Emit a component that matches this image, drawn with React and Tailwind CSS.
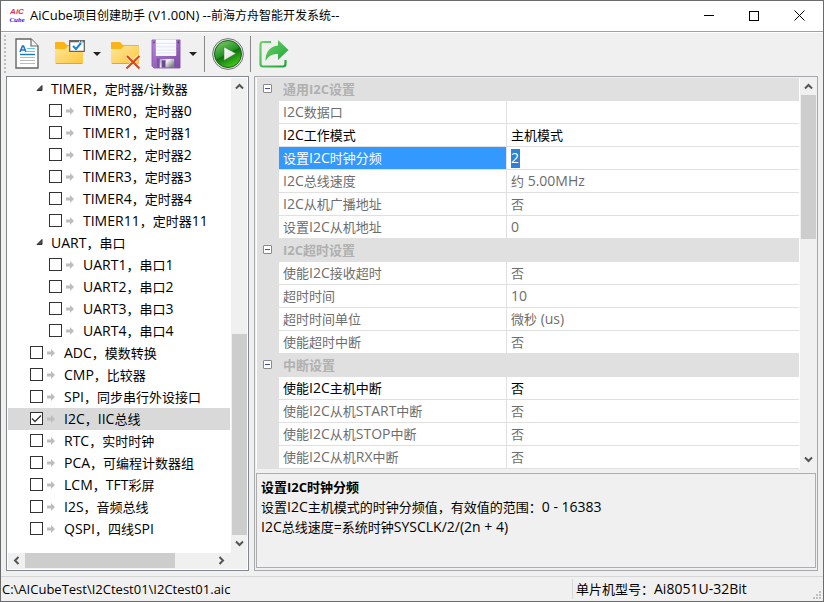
import { useState } from "react";

const TREE = [
  { id: "timer", label: "TIMER，定时器/计数器", type: "group" },
  { id: "timer0", label: "TIMER0，定时器0", type: "child" },
  { id: "timer1", label: "TIMER1，定时器1", type: "child" },
  { id: "timer2", label: "TIMER2，定时器2", type: "child" },
  { id: "timer3", label: "TIMER3，定时器3", type: "child" },
  { id: "timer4", label: "TIMER4，定时器4", type: "child" },
  { id: "timer11", label: "TIMER11，定时器11", type: "child" },
  { id: "uart", label: "UART，串口", type: "group" },
  { id: "uart1", label: "UART1，串口1", type: "child" },
  { id: "uart2", label: "UART2，串口2", type: "child" },
  { id: "uart3", label: "UART3，串口3", type: "child" },
  { id: "uart4", label: "UART4，串口4", type: "child" },
  { id: "adc", label: "ADC，模数转换", type: "item" },
  { id: "cmp", label: "CMP，比较器", type: "item" },
  { id: "spi", label: "SPI，同步串行外设接口", type: "item" },
  { id: "i2c", label: "I2C，IIC总线", type: "item" },
  { id: "rtc", label: "RTC，实时时钟", type: "item" },
  { id: "pca", label: "PCA，可编程计数器组", type: "item" },
  { id: "lcm", label: "LCM，TFT彩屏", type: "item" },
  { id: "i2s", label: "I2S，音频总线", type: "item" },
  { id: "qspi", label: "QSPI，四线SPI", type: "item" },
];

const SECTIONS = [
  {
    title: "通用I2C设置",
    rows: [
      { name: "I2C数据口", value: "" },
      { name: "I2C工作模式", value: "主机模式", enabled: true },
      { name: "设置I2C时钟分频", value: "2", editing: true },
      { name: "I2C总线速度", value: "约 5.00MHz" },
      { name: "I2C从机广播地址", value: "否" },
      { name: "设置I2C从机地址", value: "0" },
    ],
  },
  {
    title: "I2C超时设置",
    rows: [
      { name: "使能I2C接收超时", value: "否" },
      { name: "超时时间", value: "10" },
      { name: "超时时间单位", value: "微秒 (us)" },
      { name: "使能超时中断", value: "否" },
    ],
  },
  {
    title: "中断设置",
    rows: [
      { name: "使能I2C主机中断", value: "否", enabled: true },
      { name: "使能I2C从机START中断", value: "否" },
      { name: "使能I2C从机STOP中断", value: "否" },
      { name: "使能I2C从机RX中断", value: "否" },
    ],
  },
];

// Latin letters look small next to Chinese ones, so set them one pixel larger
function Mixed({ text, latin = "text-[14px]" }) {
  return (
    <span>
      {text.split(/([\x20-\x7e]+)/).map((part, i) =>
        i % 2 ? (
          <span key={i} className={`leading-none ${latin}`}>
            {part}
          </span>
        ) : (
          part
        )
      )}
    </span>
  );
}

function LogoIcon() {
  return (
    <div
      aria-hidden="true"
      className="w-4 flex flex-col items-center font-bold italic leading-[9px]"
    >
      <span className="text-[8px] text-[#e0305a] font-['Liberation_Sans',sans-serif]">
        AiC
      </span>
      <span className="text-[7px] text-[#1a1af0] font-['Liberation_Serif',serif]">
        Cube
      </span>
    </div>
  );
}

function NewFileIcon() {
  return (
    <svg width="24" height="31" viewBox="0 0 24 31" fill="none">
      <path d="M1 1h15l7 7v22H1z" fill="#fff" stroke="#666" strokeWidth="1.4" />
      <path d="M16 1v7h7" fill="#f4f4f4" stroke="#666" strokeWidth="1.2" />
      <path d="M5 14l2.5-6h1L11 14M6.2 12h3.6" stroke="#1a78c8" strokeWidth="1.6" />
      <path d="M12 10.5h8M12 13.5h8" stroke="#5cc8f5" strokeWidth="1.2" />
      <path d="M5 16.5h15" stroke="#1a78c8" strokeWidth="1.4" />
      <path d="M5 19.5h15M5 22.5h15M5 25.5h15" stroke="#bbb" strokeWidth="1.1" />
    </svg>
  );
}

function FolderBase({ id }) {
  return (
    <>
      <defs>
        <linearGradient id={id} x1="0" y1="0" x2="1" y2="1">
          <stop offset="0" stopColor="#ffe69a" />
          <stop offset="1" stopColor="#fdc63c" />
        </linearGradient>
      </defs>
      <path d="M0 5q0-1 1-1h8l3 3h15q1 0 1 1v6H0z" fill="#f9b418" />
      <path
        d="M0 11h10l3-3h14q1 0 1 1v16q0 1-1 1H1q-1 0-1-1z"
        fill={`url(#${id})`}
      />
      <path d="M1 25.5h26" stroke="#e2a62e" />
    </>
  );
}

function OpenFolderIcon() {
  return (
    <svg width="30" height="32" viewBox="0 0 30 32" fill="none">
      <FolderBase id="folderOpen" />
      <path d="M14.7 2.7h14.6v10.6H14.7z" fill="#fff" stroke="#666" strokeWidth="1.3" />
      <path d="M14.5 3.5h15" stroke="#666" strokeWidth="1.6" />
      <path d="M24 3.3h1M26.5 3.3h1" stroke="#fff" strokeWidth="1" />
      <path d="M18 8l3 3 5-6" stroke="#1683d8" strokeWidth="2" />
    </svg>
  );
}

function DeleteFolderIcon() {
  return (
    <svg width="30" height="32" viewBox="0 0 30 32" fill="none">
      <FolderBase id="folderDelete" />
      <path
        d="M16 18l12 12.5M28 18L16 30.5"
        stroke="#fff"
        strokeOpacity="0.6"
        strokeWidth="4"
      />
      <path d="M16 18l12.5 12.5M28.5 18L15.5 30.5" stroke="#d9481c" strokeWidth="2.2" />
    </svg>
  );
}

function SaveIcon() {
  return (
    <svg width="31" height="32" viewBox="0 0 32 32" fill="none">
      <defs>
        <linearGradient id="disk" x1="0" y1="0" x2="1" y2="1">
          <stop offset="0" stopColor="#b584d8" />
          <stop offset="1" stopColor="#7f48a8" />
        </linearGradient>
        <linearGradient id="shutter" x1="0" y1="0" x2="1" y2="0.6">
          <stop offset="0" stopColor="#a8a8b4" />
          <stop offset="0.5" stopColor="#f0f0f4" />
          <stop offset="1" stopColor="#80808c" />
        </linearGradient>
      </defs>
      <path d="M1 1.5h29v29H3l-2-2z" fill="url(#disk)" stroke="#8453aa" strokeWidth="0.8" />
      <path d="M5 1h21v17H5z" fill="#fafaff" />
      <path d="M5 5h21M5 8.5h21M5 12h21M5 15h21" stroke="#dde2ef" strokeWidth="0.9" />
      <path d="M2.5 3h1.3v2H2.5zM27.5 3h1.3v2h-1.3z" fill="#573078" />
      <path d="M6 20.5h20V30H6z" fill="#7d52a2" />
      <path d="M9 21h15v9H9z" fill="url(#shutter)" />
      <path d="M11 22.500h4V30h-4z" fill="#6f4594" />
    </svg>
  );
}

function RunIcon() {
  return (
    <svg width="32" height="32" viewBox="0 0 32 32" fill="none">
      <defs>
        <linearGradient id="run" x1="0.2" y1="0" x2="0.7" y2="1">
          <stop offset="0" stopColor="#7cc96c" />
          <stop offset="0.48" stopColor="#239423" />
          <stop offset="0.52" stopColor="#0c720c" />
          <stop offset="1" stopColor="#49d11b" />
        </linearGradient>
        <linearGradient id="play" x1="0" y1="0" x2="1" y2="1">
          <stop offset="0" stopColor="#fff" />
          <stop offset="1" stopColor="#d5d5d5" />
        </linearGradient>
      </defs>
      <circle cx="16" cy="16" r="15.4" fill="#dedede" stroke="#777" />
      <circle cx="16" cy="16" r="13.5" fill="url(#run)" stroke="#176319" />
      <path d="M12 9l12 6.5L12 22.5z" fill="url(#play)" stroke="#2d7a2b" strokeWidth="0.5" />
    </svg>
  );
}

function ShareIcon() {
  return (
    <svg width="30" height="30" viewBox="0 0 30 30" fill="none">
      <defs>
        <linearGradient id="share" x1="0" y1="0" x2="1" y2="1">
          <stop offset="0" stopColor="#6fd06a" />
          <stop offset="1" stopColor="#1ca838" />
        </linearGradient>
      </defs>
      <path
        d="M12 3H4Q1.500 3 1.500 5.500V25q0 2.500 2.500 2.500h20q2.500 0 2.500-2.500v-4"
        stroke="url(#share)"
        strokeWidth="2.2"
      />
      <path
        d="M19 1l10.5 10L19 21v-6Q11 14 6.500 22 6.500 8 19 6.500z"
        fill="url(#share)"
      />
    </svg>
  );
}

function Caret() {
  return (
    <svg width="8" height="4" viewBox="0 0 8 4">
      <path d="M0 0h8L4 4z" fill="#222" />
    </svg>
  );
}

function ToolButton({ label, className = "", children }) {
  return (
    <button
      type="button"
      aria-label={label}
      className={`flex h-9 items-center justify-center hover:bg-[#d5e8f8] ${className}`}
    >
      {children}
    </button>
  );
}

// Scroll bar arrows: one chevron, turned for each direction
const CHEVRONS = {
  up: "M1 6.500L4.500 3 8 6.500",
  down: "M1 2.500L4.500 6 8 2.500",
  left: "M6.500 1L3 4.500 6.500 8",
  right: "M2.500 1L6 4.500 2.500 8",
};

function ScrollArrow({ direction }) {
  return (
    <button
      type="button"
      aria-label={`Scroll ${direction}`}
      className="flex size-[17px] shrink-0 items-center justify-center"
    >
      <svg width="9" height="9" viewBox="0 0 9 9" fill="none">
        <path d={CHEVRONS[direction]} stroke="#555" strokeWidth="2" />
      </svg>
    </button>
  );
}

function TreeRow({ node, checked, selected, onToggle, onSelect }) {
  if (node.type === "group") {
    return (
      <li className="flex h-[22px] items-center pb-px pl-7">
        <svg width="7" height="10" viewBox="0 0 7 10" className="mr-2">
          <path d="M6 1.500v5H1z" fill="#505050" stroke="#303030" />
        </svg>
        <Mixed text={node.label} />
      </li>
    );
  }

  return (
    <li
      onClick={onSelect}
      className={`flex h-[22px] items-center pb-px ${
        node.type === "child" ? "pl-[41px]" : "pl-[22px]"
      } ${selected ? "bg-[#d9d9d9]" : ""}`}
    >
      <span className="grid place-items-center">
        <input
          type="checkbox"
          id={node.id}
          checked={checked}
          onChange={onToggle}
          className="peer col-start-1 row-start-1 size-[13px] appearance-none border border-[#333] bg-white"
        />
        <svg
          width="11"
          height="11"
          viewBox="0 0 11 11"
          fill="none"
          className="pointer-events-none invisible col-start-1 row-start-1 peer-checked:visible"
        >
          <path d="M1 5.500l3 3 6-6" stroke="#333" strokeWidth="1.3" />
        </svg>
      </span>
      <svg width="8" height="8" viewBox="0 0 8 8" className="mx-1">
        <path d="M0 2.500h4V0l4 4-4 4V5.500H0z" fill="#bdbdbd" />
      </svg>
      <label htmlFor={node.id} className="pl-[5px]">
        <Mixed text={node.label} />
      </label>
    </li>
  );
}

function PropertySection({ section, divisor, setDivisor }) {
  const [open, setOpen] = useState(true);

  return (
    <tbody>
      <tr className="h-[23px] bg-[#e0e0e0]">
        <td className="pr-0.5 pb-0.5">
          <button
            type="button"
            aria-label={section.title}
            aria-expanded={open}
            onClick={() => setOpen(!open)}
            className="mx-auto flex size-[9px] items-center justify-center rounded-[1px] border border-[#8a8a8a] bg-white"
          >
            <span className="h-px w-[5px] bg-[#3a55a0]" />
          </button>
        </td>
        <th colSpan={2} className="pb-0.5 pl-1 text-left font-bold text-[#b0b0b0]">
          {section.title}
        </th>
      </tr>
      {open &&
        section.rows.map((row) => (
          <tr
            key={row.name}
            className={`h-[23px] ${row.enabled ? "text-black" : "text-[#6d6d6d]"}`}
          >
            <td className="bg-[#e0e0e0]" />
            <th
              className={`border-r border-b border-[#e0e0e0] pl-1 text-left font-normal ${
                row.editing ? "bg-[#3399ff] text-white" : ""
              }`}
            >
              <Mixed text={row.name} />
            </th>
            <td className="border-b border-[#e0e0e0] pl-1">
              {row.editing ? (
                <input
                  type="text"
                  aria-label={row.name}
                  value={divisor}
                  onChange={(e) => setDivisor(e.target.value)}
                  className="block h-[19px] w-[9px] bg-[#2a82da] text-[14px] text-white outline-none"
                />
              ) : (
                <Mixed text={row.value} />
              )}
            </td>
          </tr>
        ))}
    </tbody>
  );
}

export default function App() {
  const [checked, setChecked] = useState({ i2c: true });
  const [selected, setSelected] = useState("i2c");
  const [divisor, setDivisor] = useState("2");

  return (
    <div className="flex h-screen flex-col border border-[#6b6b6b] bg-[#f0f0f0] font-['Open_Sans','Noto_Sans_CJK_SC',sans-serif] text-[13px] leading-5 text-black select-none">
      {/* Title bar */}
      <header className="flex h-[31px] shrink-0 items-center border-b border-[#a0a0a0] bg-white pb-px pl-2">
        <LogoIcon />
        <h1 className="flex-1 pl-[5px] text-[12px]">
          <Mixed
            text="AiCube项目创建助手 (V1.00N) --前海方舟智能开发系统--"
            latin="text-[13px]"
          />
        </h1>
        <button type="button" aria-label="Minimize" className="flex h-full w-[45px] items-center justify-center">
          <span className="h-px w-[10px] bg-black" />
        </button>
        <button type="button" aria-label="Maximize" className="flex h-full w-[45px] items-center justify-center">
          <span className="size-[10px] border border-black" />
        </button>
        <button type="button" aria-label="Close" className="flex h-full w-[47px] items-center justify-center">
          <svg width="11" height="11" viewBox="0 0 11 11" stroke="#000">
            <path d="M0.500 0.500l10 10M10.500 0.500l-10 10" />
          </svg>
        </button>
      </header>

      {/* Toolbar */}
      <div className="flex h-11 shrink-0 items-center border-t border-white pb-0.5 pl-[3px]">
        <span className="h-[38px] border-l-2 border-dotted border-[#bcbcbc]" />
        <ToolButton label="New project" className="w-[42px]">
          <NewFileIcon />
        </ToolButton>
        <ToolButton label="Open project" className="w-11">
          <OpenFolderIcon />
        </ToolButton>
        <ToolButton label="Recent projects" className="w-2.5">
          <Caret />
        </ToolButton>
        <ToolButton label="Close project" className="w-12">
          <DeleteFolderIcon />
        </ToolButton>
        <ToolButton label="Save project" className="w-8">
          <SaveIcon />
        </ToolButton>
        <ToolButton label="Save options" className="w-[22px]">
          <Caret />
        </ToolButton>
        <span className="h-9 w-px bg-[#888]" />
        <ToolButton label="Run" className="w-[45px]">
          <RunIcon />
        </ToolButton>
        <span className="h-9 w-px bg-[#888]" />
        <ToolButton label="Export" className="w-[45px]">
          <ShareIcon />
        </ToolButton>
      </div>

      <main className="flex min-h-0 flex-1 gap-[5px] px-[5px]">
        {/* Peripheral tree */}
        <aside className="flex w-[243px] shrink-0 flex-col border border-[#828790] bg-white p-px">
          <div className="flex min-h-0 flex-1">
            <ul className="min-w-0 flex-1 overflow-hidden whitespace-nowrap">
              {TREE.map((node) => (
                <TreeRow
                  key={node.id}
                  node={node}
                  checked={!!checked[node.id]}
                  selected={selected === node.id}
                  onSelect={() => setSelected(node.id)}
                  onToggle={() =>
                    setChecked({ ...checked, [node.id]: !checked[node.id] })
                  }
                />
              ))}
            </ul>
            <div className="ml-px flex w-4 flex-col items-center bg-[#f0f0f0] pb-px">
              <ScrollArrow direction="up" />
              <span className="flex-1" />
              <span className="h-[201px] w-[15px] bg-[#cdcdcd]" />
              <ScrollArrow direction="down" />
            </div>
          </div>
          <div className="flex h-4 shrink-0 items-center bg-[#f0f0f0] pr-[17px] pb-px">
            <ScrollArrow direction="left" />
            <span className="h-[15px] w-[150px] bg-[#cdcdcd]" />
            <span className="flex-1" />
            <ScrollArrow direction="right" />
          </div>
        </aside>

        {/* Properties */}
        <section className="flex min-w-0 flex-1 flex-col border border-[#a9a9ad] bg-[#f0f0f0] p-px">
          <div className="flex min-h-0 flex-1 bg-white pl-px">
            <div className="min-w-0 flex-1 overflow-hidden">
              <table className="w-full table-fixed border-separate border-spacing-0">
                <colgroup>
                  <col className="w-[22px]" />
                  <col className="w-[228px]" />
                  <col />
                </colgroup>
                {SECTIONS.map((section) => (
                  <PropertySection
                    key={section.title}
                    section={section}
                    divisor={divisor}
                    setDivisor={setDivisor}
                  />
                ))}
              </table>
            </div>
            <div className="ml-px flex w-4 flex-col items-center bg-[#f0f0f0] pb-px">
              <ScrollArrow direction="up" />
              <span className="h-36 w-[15px] bg-[#cdcdcd]" />
              <span className="flex-1" />
              <ScrollArrow direction="down" />
            </div>
          </div>
          <div className="mt-1 mb-px h-[95px] shrink-0 border border-[#adadb0] px-1 pt-[3px]">
            <h2 className="font-bold">设置I2C时钟分频</h2>
            <p>
              <Mixed text="设置I2C主机模式的时钟分频值，有效值的范围：0 - 16383" />
            </p>
            <p>
              <Mixed text="I2C总线速度=系统时钟SYSCLK/2/(2n + 4)" />
            </p>
          </div>
        </section>
      </main>

      {/* Status bar */}
      <footer className="mt-[5px] flex h-[25px] shrink-0 items-center border-t border-[#d7d7d7]">
        <span className="min-w-0 flex-1 pl-px">C:\AICubeTest\I2Ctest01\I2Ctest01.aic</span>
        <span className="flex w-[251px] items-center justify-between border-l border-[#d7d7d7] pl-[3px]">
          <Mixed text="单片机型号：Ai8051U-32Bit" />
          <svg width="8" height="8" viewBox="0 0 8 8" fill="#bfbfbf" className="mr-[2px] self-end">
            <path d="M6 0h2v2H6zM3 3h2v2H3zM6 3h2v2H6zM0 6h2v2H0zM3 6h2v2H3zM6 6h2v2H6z" />
          </svg>
        </span>
      </footer>
    </div>
  );
}
